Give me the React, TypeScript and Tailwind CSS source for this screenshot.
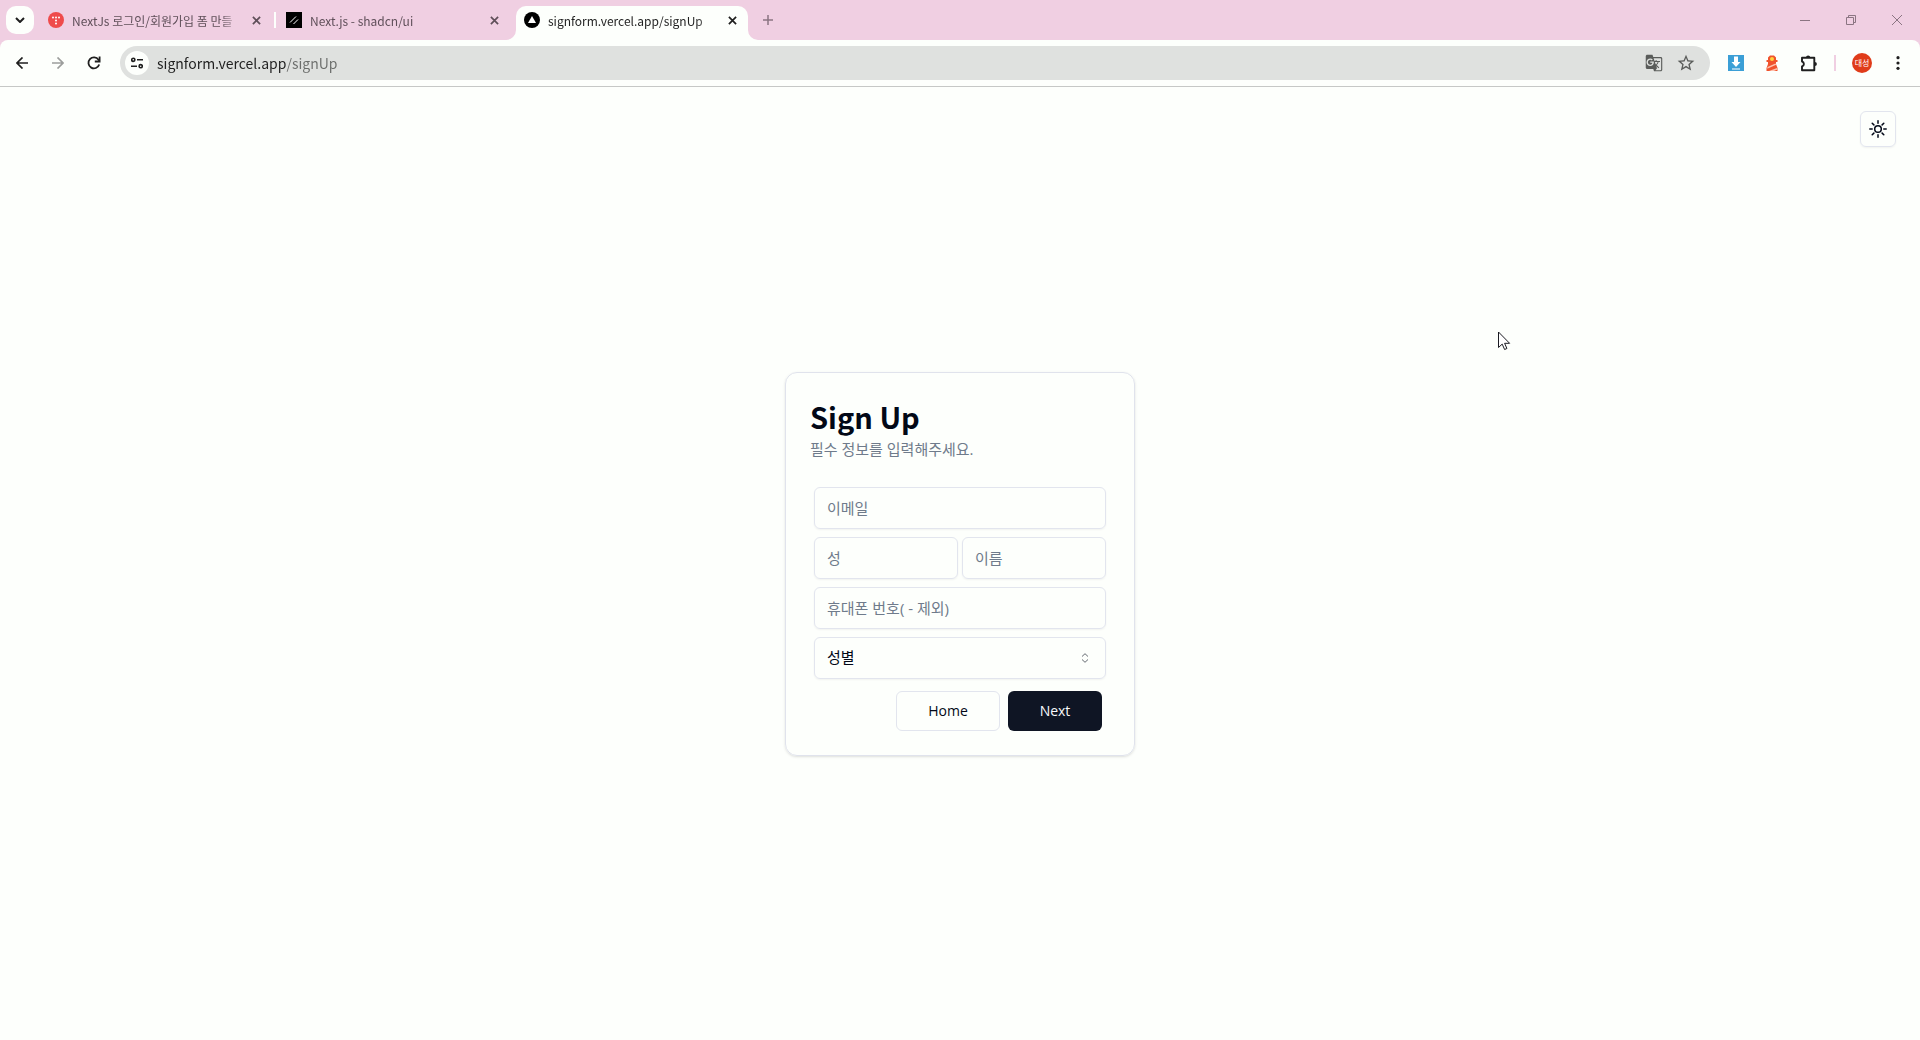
import type { ReactNode } from 'react';
import { MdGTranslate, MdStarOutline } from 'react-icons/md';

type TabProps = {
  title: string;
  icon: ReactNode;
  active?: boolean;
};

function CloseIcon() {
  return (
    <svg width="9" height="9" viewBox="0 0 10 10" stroke="currentColor" strokeWidth="1.900">
      <path d="M1 1l8 8M9 1l-8 8" />
    </svg>
  );
}

function TabCorner(props: { className: string }) {
  return (
    <svg
      width="10"
      height="10"
      viewBox="0 0 10 10"
      className={`absolute bottom-0 fill-[#fdfffc] ${props.className}`}
    >
      <path d="M10 0v10H0A10 10 0 0 0 10 0z" />
    </svg>
  );
}

function Tab(props: TabProps) {
  const { title, icon, active } = props;
  return (
    <div
      className={
        active
          ? 'relative flex h-[34px] w-[232px] items-center rounded-t-[10px] bg-[#fdfffc] px-2 pb-1.5 text-[#1f1f1f]'
          : 'flex h-[34px] w-[232px] items-center px-2 pb-1.5 text-[#5f4f59]'
      }
    >
      {active && <TabCorner className="-left-2.5" />}
      {icon}
      <span className="ml-2 w-[169px] whitespace-nowrap pt-0.5 text-xs leading-5 [mask-image:linear-gradient(to_right,black_88%,transparent)]">
        {title}
      </span>
      <button aria-label="탭 닫기" className="ml-auto flex size-4 items-center justify-center">
        <CloseIcon />
      </button>
      {active && <TabCorner className="-right-2.5 -scale-x-100" />}
    </div>
  );
}

function TabStrip() {
  return (
    <header className="flex h-10 items-end justify-between bg-[#f0cfe2]">
      <div className="flex items-end">
        <button
          aria-label="탭 검색"
          className="mx-1.5 mb-1.5 flex size-7 items-center justify-center rounded-[10px] bg-[#fdfffc]"
        >
          <svg width="10" height="6" viewBox="0 0 10 6" fill="none" stroke="#1f1f1f" strokeWidth="2">
            <path d="M1 1l4 4 4-4" />
          </svg>
        </button>
        <Tab
          title="NextJs 로그인/회원가입 폼 만들"
          icon={
            <svg width="16" height="16" viewBox="0 0 16 16" className="shrink-0">
              <circle cx="8" cy="8" r="8" fill="#ef4b4b" />
              <g fill="#fff">
                <circle cx="5" cy="5.500" r="1" />
                <circle cx="8" cy="5.500" r="1" />
                <circle cx="11" cy="5.500" r="1" />
                <circle cx="8" cy="8.500" r="1" />
                <circle cx="8" cy="11.500" r="1" />
              </g>
            </svg>
          }
        />
        <div className="mx-0.5 mb-3 h-4 w-0.5 bg-[#fdfffc]" />
        <Tab
          title="Next.js - shadcn/ui"
          icon={
            <svg width="16" height="16" viewBox="0 0 16 16" className="shrink-0">
              <path d="M0 0h16v16H0z" />
              <path d="M4 10.500l6-6M7.500 12l4.500-4.500" stroke="#fff" />
            </svg>
          }
        />
        <div className="w-1.5" />
        <Tab
          active
          title="signform.vercel.app/signUp"
          icon={
            <svg width="16" height="16" viewBox="0 0 16 16" className="shrink-0">
              <circle cx="8" cy="8" r="8" />
              <path d="M8 4l4 7H4z" fill="#fff" />
            </svg>
          }
        />
        <button aria-label="새 탭" className="mb-1.5 ml-1.5 flex size-7 items-center justify-center">
          <svg width="10" height="10" viewBox="0 0 10 10" stroke="#8b7582" strokeWidth="1.500">
            <path d="M5 0v10M0 5h10" />
          </svg>
        </button>
      </div>
      <div className="flex h-10 text-[#8b7582]">
        <button aria-label="최소화" className="flex w-[46px] items-center justify-center">
          <svg width="10" height="10" viewBox="0 0 10 10" stroke="currentColor">
            <path d="M0 5.500h10" />
          </svg>
        </button>
        <button aria-label="이전 크기로 복원" className="flex w-[46px] items-center justify-center">
          <svg width="10" height="10" viewBox="0 0 10 10" fill="none" stroke="currentColor">
            <path d="M.5 2.500h7v7h-7zM2.500 2.500v-2h7v7h-2" />
          </svg>
        </button>
        <button aria-label="닫기" className="flex w-[46px] items-center justify-center">
          <svg width="10" height="10" viewBox="0 0 10 10" stroke="currentColor">
            <path d="M0 0l10 10M10 0L0 10" />
          </svg>
        </button>
      </div>
    </header>
  );
}

function Toolbar() {
  return (
    <div className="bg-[#f0cfe2]">
      <div className="flex h-[47px] items-center rounded-t-lg border-b border-[#c6c8c6] bg-[#fdfffc] px-1">
        <button aria-label="뒤로" className="flex w-9 justify-center">
          <svg width="12" height="12" viewBox="0 0 12 12" fill="none" stroke="#1f1f1f" strokeWidth="1.700">
            <path d="M12 6H1M6.500.5L1 6l5.500 5.500" />
          </svg>
        </button>
        <button aria-label="앞으로" className="flex w-9 justify-center">
          <svg width="12" height="12" viewBox="0 0 12 12" fill="none" stroke="#9c9e9c" strokeWidth="1.700">
            <path d="M0 6h11M5.500.5L11 6l-5.500 5.500" />
          </svg>
        </button>
        <button aria-label="새로고침" className="flex w-9 justify-center">
          <svg width="14" height="14" viewBox="0 0 14 14" fill="none" stroke="#1f1f1f" strokeWidth="1.800">
            <path d="M12.200 8.500A5.500 5.500 0 1 1 11.500 3.800L12.500 5" />
            <path d="M12.600 .5v5H7.800" />
          </svg>
        </button>
        <div className="mx-2 flex h-[34px] flex-1 items-center rounded-full bg-[#dfe1df] pl-[5px] pr-3.5">
          <button
            aria-label="사이트 정보 보기"
            className="flex size-6 items-center justify-center rounded-full bg-[#fdfffc]"
          >
            <svg width="12" height="12" viewBox="0 0 12 12" fill="none" stroke="#1f1f1f" strokeWidth="1.600">
              <circle cx="2.300" cy="2.800" r="1.600" />
              <path d="M6 2.800h6M0 9.200h6" />
              <circle cx="9.700" cy="9.200" r="1.600" />
            </svg>
          </button>
          {/* the host part is darker than the path */}
          <input
            type="text"
            aria-label="주소창"
            defaultValue="signform.vercel.app/signUp"
            className="ml-2 min-w-0 flex-1 bg-linear-to-r from-[#1f1f1f] from-[129px] to-[#6b6d6b] to-[129px] bg-clip-text text-sm text-transparent outline-none"
          />
          <button aria-label="이 페이지 번역하기" className="flex w-8 justify-center text-[#5a5c5a]">
            <MdGTranslate size={18} />
          </button>
          <button aria-label="북마크에 추가" className="-mr-1.5 flex w-8 justify-center text-[#5a5c5a]">
            <MdStarOutline size={20} />
          </button>
        </div>
        <button aria-label="다운로더" className="flex w-9 justify-center">
          <svg width="16" height="16" viewBox="0 0 16 16">
            <path d="M0 0h16v16H0z" fill="#3b9fd6" />
            <path d="M6 1.500h4V7h2.500L8 12 3.500 7H6zM4 13.500h8v1H4z" fill="#fff" />
          </svg>
        </button>
        <button aria-label="Lighthouse" className="flex w-9 justify-center">
          <svg width="12" height="16" viewBox="0 0 12 16">
            <path d="M2 5V2.500L4 .5h4l2 2V5h1.500v2H10v2l1.500 4v3H.5v-3L2 9V7H.5V5z" fill="#f0532d" />
            <circle cx="6" cy="4" r="2" fill="#ffd33d" />
            <path d="M1.500 12l8-3.500.7 1.300-9 4zM3 16l8-3 .4 1.400L8 16z" fill="#ffc4b0" />
          </svg>
        </button>
        <button aria-label="확장 프로그램" className="flex w-9 justify-center">
          <svg width="17" height="17" viewBox="0 0 17 17">
            <path
              d="M2 2.800h12.300v12.400H2v-3.700a2.600 2.600 0 0 0 0-5z"
              fill="none"
              stroke="#1f1f1f"
              strokeWidth="1.900"
              strokeLinejoin="round"
            />
            <path d="M6 2.500a2 2 0 0 1 4.200 0zM14.800 6.900a2 2 0 0 1 0 4.200z" fill="#1f1f1f" />
          </svg>
        </button>
        <div className="mx-2 h-4 w-0.5 bg-[#f0cfe2]" />
        <button aria-label="프로필" className="flex w-9 justify-center">
          <span className="flex size-5 items-center justify-center rounded-full bg-[#e03c1a] text-[8px] leading-none text-white">
            대성
          </span>
        </button>
        <button aria-label="메뉴" className="flex w-9 justify-center">
          <svg width="4" height="14" viewBox="0 0 4 14" fill="#1f1f1f">
            <circle cx="2" cy="1.700" r="1.600" />
            <circle cx="2" cy="7" r="1.600" />
            <circle cx="2" cy="12.300" r="1.600" />
          </svg>
        </button>
      </div>
    </div>
  );
}

function Field(props: { label: string; type?: string }) {
  return (
    <input
      type={props.type ?? 'text'}
      aria-label={props.label}
      placeholder={props.label}
      className="h-[42px] w-full min-w-0 rounded-md border border-[#e2e5ee] px-3 text-[15px] shadow-xs outline-none placeholder:text-[#6f7b8b]"
    />
  );
}

function SignUpCard() {
  return (
    <form className="w-[350px] rounded-xl border border-[#e0e3ec] p-6 shadow-sm">
      <h1 className="font-['Noto_Sans_CJK_KR',sans-serif] text-[29px] leading-[38px] font-bold">
        Sign Up
      </h1>
      <p className="mt-1 text-[15px] leading-5 text-[#6f7b8b]">필수 정보를 입력해주세요.</p>
      <div className="mt-6 flex flex-col gap-2 p-1">
        <Field label="이메일" type="email" />
        <div className="flex gap-1">
          <Field label="성" />
          <Field label="이름" />
        </div>
        <Field label="휴대폰 번호( - 제외)" type="tel" />
        <div className="relative">
          <select
            aria-label="성별"
            className="h-[42px] w-full appearance-none rounded-md border border-[#e2e5ee] px-3 text-[15px] shadow-xs outline-none"
          >
            <option>성별</option>
            <option>남성</option>
            <option>여성</option>
          </select>
          <svg
            width="10"
            height="10"
            viewBox="0 0 10 10"
            fill="none"
            stroke="#020817"
            className="pointer-events-none absolute right-4 top-4 opacity-60"
          >
            <path d="M2 3.500L5 .7l3 2.800M2 6.500l3 2.800 3-2.800" />
          </svg>
        </div>
      </div>
      <div className="mt-2 flex justify-end gap-2 pr-2">
        <button type="button" className="h-10 w-[104px] rounded-md border border-[#e2e5ee] text-sm">
          Home
        </button>
        <button type="button" className="h-10 w-[94px] rounded-md bg-[#0f1524] text-sm text-[#f8fafc]">
          Next
        </button>
      </div>
    </form>
  );
}

function MousePointer() {
  return (
    <svg
      width="13"
      height="20"
      viewBox="0 0 13 20"
      className="pointer-events-none absolute left-[78%] top-[331px]"
    >
      <path
        d="M.5 1v15.500l3.700-3.400 2.400 5.400 2.300-1-2.300-5.200h5z"
        fill="#fff"
        stroke="#1a1a22"
        strokeLinejoin="round"
      />
    </svg>
  );
}

export default function App() {
  return (
    <div className="relative flex min-h-screen flex-col bg-[#fdfffc] font-['Open_Sans','Noto_Sans_CJK_KR',sans-serif] text-[#020817]">
      <div className="font-['Noto_Sans_CJK_KR',sans-serif]">
        <TabStrip />
        <Toolbar />
      </div>
      <main className="relative flex flex-1 items-center justify-center">
        <button
          aria-label="테마 변경"
          className="absolute right-6 top-6 flex size-9 items-center justify-center rounded-md border border-[#e2e5ee] shadow-xs"
        >
          <svg width="18" height="18" viewBox="0 0 18 18" fill="none" stroke="#020817" strokeWidth="1.500">
            <circle cx="9" cy="9" r="3.300" />
            <path
              d="M9 .8v2.400M9 14.800v2.400M.8 9h2.400M14.800 9h2.400M3.200 3.200l1.700 1.700M13.100 13.100l1.700 1.700M3.200 14.800l1.700-1.700M13.100 4.900l1.700-1.700"
              strokeLinecap="round"
            />
          </svg>
        </button>
        <SignUpCard />
      </main>
      <MousePointer />
    </div>
  );
}
